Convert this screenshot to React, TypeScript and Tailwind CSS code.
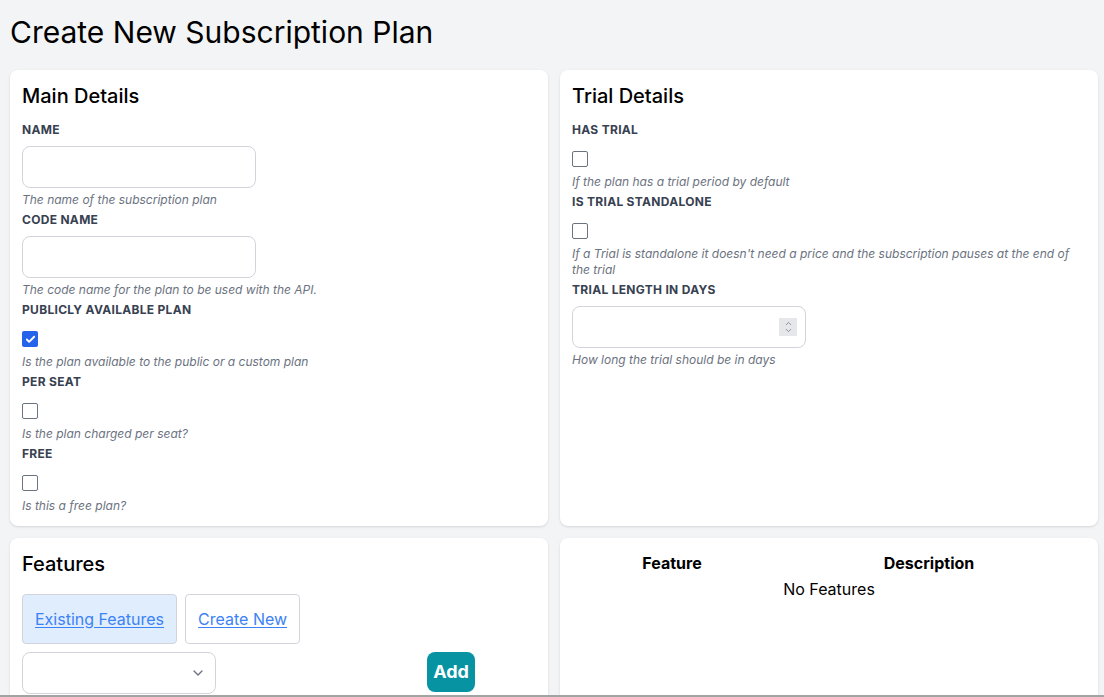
import { ChevronDown, ChevronUp, Check } from "lucide-react";

function Label({ children }: { children: React.ReactNode }) {
  return <div className="text-xs font-bold uppercase leading-4 tracking-wide text-[#374151]">{children}</div>;
}

function Help({ children }: { children: React.ReactNode }) {
  return <div className="mb-1 text-xs italic leading-4 text-[#6b7280]">{children}</div>;
}

function TextInput() {
  return <div className="mt-2 h-[42px] w-[234px] rounded-lg border border-[#d1d5db] bg-white" />;
}

function Checkbox({ checked = false }: { checked?: boolean }) {
  return checked ? (
    <div className="mt-[13px] mb-[7px] flex h-4 w-4 items-center justify-center rounded-[2px] bg-[#2563eb]">
      <Check size={11} strokeWidth={4} className="text-white" />
    </div>
  ) : (
    <div className="mt-[13px] mb-[7px] h-4 w-4 rounded-[2px] border border-[#6b7280] bg-white" />
  );
}

export default function App() {
  return (
    <div
      className="min-h-screen bg-[#f3f4f6] pl-[10px] pr-[6px] pt-[14px] text-black"
      style={{ fontFamily: "Inter, 'Noto Sans', sans-serif" }}
    >
      <h1 className="mb-5 text-[30px] leading-9 font-normal">Create New Subscription Plan</h1>

      <div className="grid grid-cols-2 gap-3">
        {/* Main details */}
        <div className="rounded-lg bg-white px-3 pt-3 pb-2 shadow-sm">
          <h2 className="mb-3 text-xl leading-7 font-medium">Main Details</h2>
          <Label>Name</Label>
          <TextInput />
          <div className="mt-1">
            <Help>The name of the subscription plan</Help>
          </div>
          <Label>Code Name</Label>
          <TextInput />
          <div className="mt-1">
            <Help>The code name for the plan to be used with the API.</Help>
          </div>
          <Label>Publicly Available Plan</Label>
          <Checkbox checked />
          <Help>Is the plan available to the public or a custom plan</Help>
          <Label>Per Seat</Label>
          <Checkbox />
          <Help>Is the plan charged per seat?</Help>
          <Label>Free</Label>
          <Checkbox />
          <Help>Is this a free plan?</Help>
        </div>

        {/* Trial details */}
        <div className="rounded-lg bg-white px-3 pt-3 pb-2 shadow-sm">
          <h2 className="mb-3 text-xl leading-7 font-medium">Trial Details</h2>
          <Label>Has Trial</Label>
          <Checkbox />
          <Help>If the plan has a trial period by default</Help>
          <Label>Is Trial Standalone</Label>
          <Checkbox />
          <Help>
            If a Trial is standalone it doesn't need a price and the subscription pauses at the end of the trial
          </Help>
          <Label>Trial Length in Days</Label>
          <div className="mt-2 flex h-[42px] w-[234px] items-center justify-end rounded-lg border border-[#d1d5db] bg-white pr-[8px]">
            <div className="flex h-[18px] w-[18px] flex-col items-center justify-center bg-[#e5e7eb] text-[#6b7280]">
              <ChevronUp size={9} strokeWidth={2} className="-mb-[1px]" />
              <ChevronDown size={9} strokeWidth={2} className="-mt-[1px]" />
            </div>
          </div>
          <div className="mt-1">
            <Help>How long the trial should be in days</Help>
          </div>
        </div>

        {/* Features */}
        <div className="h-[180px] rounded-lg bg-white p-3 shadow-sm">
          <h2 className="mb-4 text-xl leading-7 font-medium">Features</h2>
          <div className="flex gap-2">
            <button className="rounded border border-[#d1d5db] bg-[#e0edfd] px-3 py-3 text-base leading-6 text-[#3b82f6] underline underline-offset-2">
              Existing Features
            </button>
            <button className="rounded border border-[#d1d5db] bg-white px-3 py-3 text-base leading-6 text-[#3b82f6] underline underline-offset-2">
              Create New
            </button>
          </div>
          <div className="mt-2 flex items-start">
            <div className="flex h-[42px] w-[194px] items-center justify-end rounded-lg border border-[#d1d5db] bg-white pr-[9px]">
              <ChevronDown size={16} strokeWidth={2} className="text-[#6b7280]" />
            </div>
            <button className="ml-[211px] h-10 w-12 rounded-lg bg-[#0893a3] text-lg font-bold text-white">Add</button>
          </div>
        </div>

        {/* Features table */}
        <div className="h-[180px] rounded-lg bg-white p-3 shadow-sm">
          <table className="w-full table-fixed">
            <thead>
              <tr>
                <th className="w-[200px] pt-[1px] text-base leading-6 font-bold">Feature</th>
                <th className="pt-[1px] text-base leading-6 font-bold">Description</th>
              </tr>
            </thead>
            <tbody>
              <tr>
                <td colSpan={2} className="pt-[2px] text-center text-base leading-6">
                  No Features
                </td>
              </tr>
            </tbody>
          </table>
        </div>
      </div>

      <div className="fixed bottom-0 left-0 right-0 h-[2px] bg-[#a3a3a3]" />
    </div>
  );
}
